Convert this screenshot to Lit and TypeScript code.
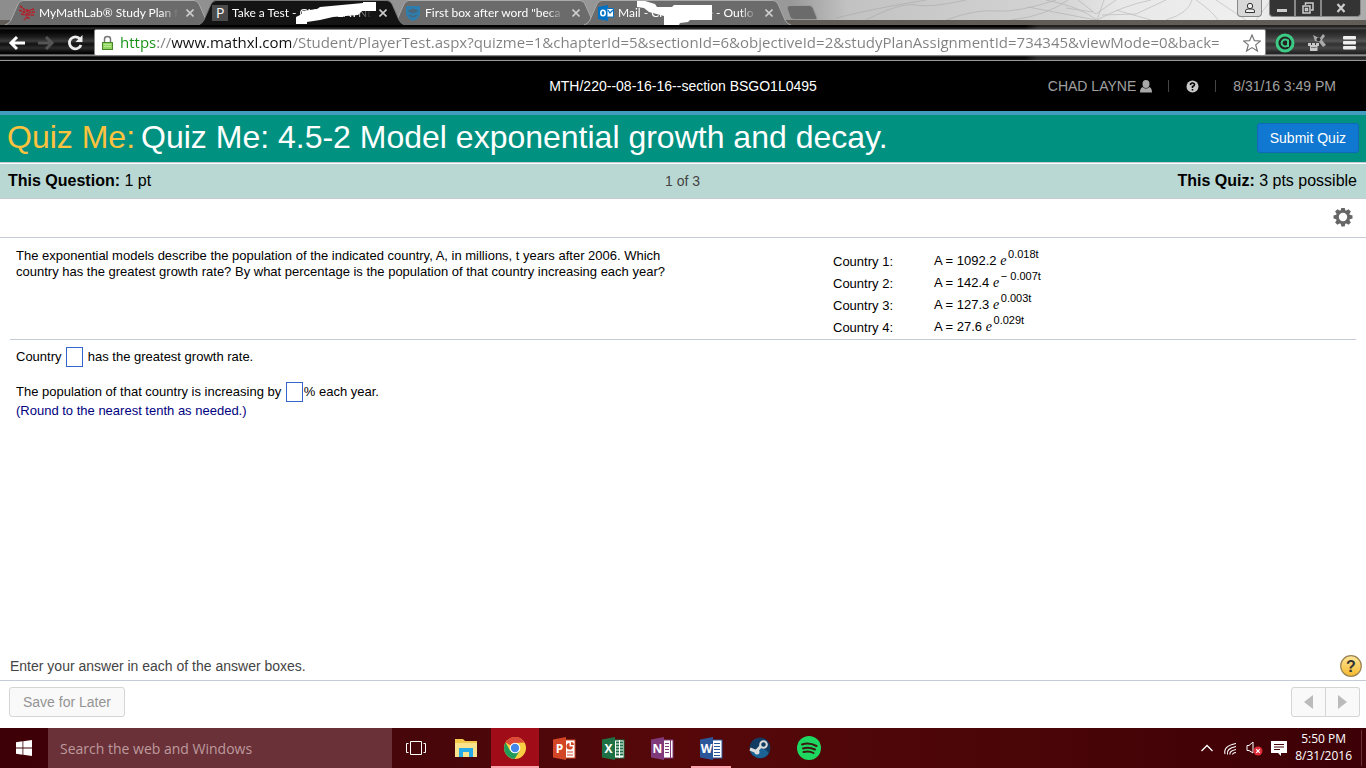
import { LitElement, html, css, svg, TemplateResult } from "lit";
import { customElement, property } from "lit/decorators.js";

@customElement("browser-tab")
class BrowserTab extends LitElement {
  @property() label = "";
  @property({ type: Boolean, reflect: true }) active = false;
  static styles = css`
    :host { flex: 0 0 193px; min-width: 0; position: relative; display: flex; align-items: center; height: 25px;
      box-sizing: border-box; padding: 0 0 0 14px; gap: 4px; color: #fff;
      font: 12px Lato, "Open Sans", sans-serif; }
    .shape { position: absolute; left: 0; top: 0; width: 207px; height: 25px; }
    .shape path { fill: #6c6b6b; stroke: #aaa; }
    :host([active]) .shape path { fill: #141414; stroke: #777; }
    :host([active]) { z-index: 1; }
    .icon, .title, .close { position: relative; }
    .icon { width: 16px; height: 16px; }
    .title { flex: 1; min-width: 0; overflow: hidden; white-space: pre; line-height: 18px;
      -webkit-mask-image: linear-gradient(90deg, #000 88%, transparent); }
    .close { border: 0; background: none; padding: 0; width: 16px; height: 20px; display: grid; place-items: center; }
    .close svg { width: 8px; height: 8px; stroke: #ccc; stroke-width: 1.6; }
    ::slotted(.cover) { position: absolute; left: 0; top: 0; width: 193px; height: 25px; }
  `;
  render() {
    return html`
      <svg class="shape" viewBox="0 0 207 25"><path d="M0 25 Q4 24 6 20 L13 4 Q15 .5 18 .5 H189 Q192 .5 194 4 L201 20 Q203 24 207 25"/></svg>
      <span class="icon"><slot name="icon"></slot></span>
      <span class="title">${this.label}</span>
      <button class="close" aria-label="Close tab"><svg viewBox="0 0 8 8"><path d="M.5 .5 7.5 7.5M7.5 .5 .5 7.5"/></svg></button>
      <slot></slot>`;
  }
}

@customElement("browser-chrome")
class BrowserChrome extends LitElement {
  static styles = css`
    :host { display: block; height: 61px; overflow: hidden; position: relative; }
    .strip { display: flex; height: 25px; padding-left: 5px; position: relative; box-sizing: border-box; background:
      linear-gradient(#0000 20px, #625c57 20px),
      linear-gradient(90deg, #8d8d8d, #999 58%, #c2c2c2 62%, #d5d5d5 78%, #e8e8e8 82%, #f0f0f0 92%, #aaa); }
    .trees { position: absolute; right: 0; top: 0; width: 550px; height: 20px; fill: none; stroke: #999; stroke-width: .8; opacity: .5; }
    .newtab { width: 32px; height: 15px; margin: 5px 0 0 9px; padding: 0; border: 0; background: none; }
    .newtab svg, .icon svg { display: block; }
    .windowbtns { margin-left: auto; display: flex; position: relative; height: 17px; margin-right: 5px; }
    .windowbtns button { border: 1px solid #888; border-top: 0; padding: 0; background: #343434; display: grid; place-items: center; width: 26px; }
    .windowbtns .user { background: #d8d8d8; width: 25px; margin-right: 7px; border-radius: 0 0 4px 4px; }
    .windowbtns .min { border-radius: 0 0 0 4px; }
    .windowbtns .shut { width: 40px; border-radius: 0 0 4px 0; }
    .bar { display: flex; align-items: center; height: 36px; box-sizing: border-box; padding: 0 1px 0 2px; border-bottom: 1px solid #999;
      background: linear-gradient(90deg, #0000 75%, #fff2 76%), linear-gradient(#000 0 2px, #333 3px, #060606 5px 7px, #1c1c1c 12px, #3b3b3b 16px, #111 19px, #2c2c2c 23px, #080808 27px, #000 29px, #aaa 30px, #555 31px, #000 32px, #111 34px); }
    .bar button { border: 0; background: none; padding: 0; display: grid; place-items: center; }
    .nav { width: 29px; }
    .address { flex: 1; min-width: 0; display: flex; align-items: center; height: 27px; background: #fff; border: 1px solid #888; box-sizing: border-box; border-radius: 2px; margin-left: 5px; padding: 0 4px 0 7px; }
    .address svg { flex: none; }
    .address input { flex: 1; min-width: 0; border: 0; outline: 0; padding: 0 0 2px; margin-left: 7px; height: 23px; box-sizing: border-box;
      font: 15px "Open Sans", "Noto Sans", sans-serif; color: transparent;
      background: linear-gradient(90deg, #159015 0 37px, #808080 37px 52px, #111 52px 171px, #808080 171px);
      -webkit-background-clip: text; background-clip: text; }
    .ext { width: 32px; margin-left: 3px; }
    .ext + .ext { margin-left: 0; }
  `;
  render() {
    return html`
      <div class="strip">
        <svg class="trees" viewBox="0 0 550 20" preserveAspectRatio="none"><path d="M20 18Q60 8 110 0M50 20Q85 2 100 5T150 0M130 20Q160 9 180 11T240 0M195 20Q230 16 252 0M212 7 280 20M230 0Q262 6 281 20L288 0M281 20Q306 6 335 0M262 0 280 14 300 0M250 8 277 12M286 15 320 14 350 0M335 20 300 10M380 0Q395 10 402 20M350 20Q373 13 376 0M400 0 430 20M440 20 455 0"/></svg>
        <browser-tab label="MyMathLab® Study Plan f">
          <svg slot="icon" width="16" height="16" viewBox="0 0 16 16" fill="none" stroke="#b51f2a" stroke-width="1.7"><path d="M1 1 7 6M0 5 7 8M2 9 7 10M15 4 9 6M16 7 9 8M15 10 9 10M8 4V12L5 15M8 12 11 14" stroke-dasharray="3 .7"/></svg>
        </browser-tab>
        <browser-tab active label="Take a Test - CHAD LAYNE">
          <svg slot="icon" width="16" height="16"><rect width="16" height="16" fill="#4b4b4b"/><text x="4" y="13" font-family="Open Sans" font-size="14" fill="#fff">P</text></svg>
          <svg class="cover" viewBox="0 0 193 25"><path fill="#fff" d="M98 24V17L104 14V11L119 9 122 7 165 3V2H178V11H164L160 15 135 17 122 20 109 22V24Z"/></svg>
        </browser-tab>
        <browser-tab label='First box after word "beca'>
          <svg slot="icon" width="16" height="16" viewBox="0 0 16 16"><path fill="#2d7daf" d="M1 1H15V8Q15 13 8 16Q1 13 1 8Z"/><path fill="#4a6678" d="M2 6 8 3.500 14 6 8 8.500ZM4 9.500 8 11 12 9.500V11L8 12.500 4 11Z"/></svg>
        </browser-tab>
        <browser-tab label="Mail - Chad Layne - Outlo">
          <svg slot="icon" width="16" height="16" viewBox="0 0 16 16"><path fill="#0072c6" d="M0 2 10 0V16L0 14Z"/><path fill="#fff" stroke="#0072c6" d="M9.500 3.500H15.500V12H9.500"/><path d="M10 5 12 8 15 5" fill="none" stroke="#0072c6" stroke-width="1.300"/><ellipse cx="5" cy="8" rx="2.200" ry="2.800" fill="none" stroke="#fff" stroke-width="1.600"/></svg>
          <svg class="cover" viewBox="0 0 193 25"><path fill="#fff" d="M53 1H61L71 4 73 7 88 7 90 5H128V20H106L104 22 96 23 95 25H80V16L65 12 60 8 53 7Z"/></svg>
        </browser-tab>
        <button class="newtab" aria-label="New tab"><svg width="32" height="15"><path d="M1 3Q1 .5 4 .5H23Q26 .5 27 3L31 13Q31 14.500 29 14.500H8Q5 14.500 4 12Z" fill="#6c6b6b" stroke="#9a9a9a"/></svg></button>
        <div class="windowbtns">
          <button class="user" aria-label="User"><svg width="12" height="12" viewBox="0 0 12 12" fill="#eee" stroke="#333"><path d="M1.500 10.500V9Q1.500 7 4 7H8Q10.500 7 10.500 9V10.500Z"/><circle cx="6" cy="4" r="2.700"/></svg></button>
          <button class="min" aria-label="Minimize"><svg width="12" height="12"><rect x="1" y="7" width="10" height="3" fill="#ccc"/></svg></button>
          <button aria-label="Restore"><svg width="12" height="12" fill="none" stroke="#ccc" stroke-width="1.500"><path d="M3.500 3V1H11V8H9M1 4H8V11H1ZM3.500 6.500H5.500V8.500H3.500Z"/></svg></button>
          <button class="shut" aria-label="Close"><svg width="10" height="10" stroke="#ccc" stroke-width="2.200"><path d="M1.500 1 8.500 9M8.500 1 1.500 9"/></svg></button>
        </div>
      </div>
      <div class="bar">
        <button class="nav" aria-label="Back"><svg width="18" height="16" fill="none" stroke="#fff" stroke-width="3"><path d="M17 8H3M9 2 3 8 9 14"/></svg></button>
        <button class="nav" aria-label="Forward"><svg width="18" height="16" fill="none" stroke="#555" stroke-width="3"><path d="M1 8H15M9 2 15 8 9 14"/></svg></button>
        <button class="nav" aria-label="Reload"><svg width="16" height="16"><path d="M13 4A6 6 0 1 0 14 10" fill="none" stroke="#eee" stroke-width="2.800"/><path d="M15.500 0V7H8.500Z" fill="#eee"/></svg></button>
        <div class="address">
          <svg width="11" height="16" viewBox="0 0 11 16"><path d="M2.500 8V4Q2.500 1.500 5.500 1.500T8.500 4V8" fill="none" stroke="#777" stroke-width="1.500"/><rect x=".5" y="7.500" width="10" height="7" fill="#8ed45d" stroke="#48862c"/><path d="M2 9.500H9M2 11.500H9" stroke="#b7e896"/></svg>
          <input type="text" aria-label="Address" value="https://www.mathxl.com/Student/PlayerTest.aspx?quizme=1&chapterId=5&sectionId=6&objectiveId=2&studyPlanAssignmentId=734345&viewMode=0&back=">
          <svg width="18" height="18" viewBox="0 0 18 18"><path d="M9 1 11.400 6.700 17.400 7 12.700 10.900 14.400 17 9 13.600 3.600 17 5.300 10.900 .6 7 6.600 6.700Z" fill="#fff" stroke="#777" stroke-width="1.200"/></svg>
        </div>
        <button class="ext" aria-label="Extension"><svg width="20" height="20"><circle cx="10" cy="10" r="8" fill="#222" stroke="#3ccb84" stroke-width="3"/><path d="M13 8A3.500 3.500 0 1 0 13 12M13 6.500V14" fill="none" stroke="#3ccb84" stroke-width="2"/></svg></button>
        <button class="ext" aria-label="Extension"><svg width="18" height="20" viewBox="0 0 18 20"><path d="M5 2 9 4 12 5 15 1 17 3 14 7 18 12 15 14 11 9 7 8Z" fill="#aaa"/><circle cx="10.500" cy="6.500" r="2" fill="#333"/><path d="M0 10H3V12H4V10H7V12H8V10H11V13H9.500V18H2V13H0Z" fill="#c8c8c8"/><path d="M3 14.500H8.500" stroke="#777"/></svg></button>
        <button class="ext" aria-label="Menu"><svg width="13" height="14" fill="#eee"><rect width="13" height="3.500" rx="1"/><rect y="5" width="13" height="3.500" rx="1"/><rect y="10" width="13" height="3.500" rx="1"/></svg></button>
      </div>`;
  }
}

interface Model { country: number; scale: string; exponent: string; }

@customElement("quiz-page")
class QuizPage extends LitElement {
  models: Model[] = [
    { country: 1, scale: "1092.2", exponent: "0.018t" },
    { country: 2, scale: "142.4", exponent: "− 0.007t" },
    { country: 3, scale: "127.3", exponent: "0.003t" },
    { country: 4, scale: "27.6", exponent: "0.029t" },
  ];
  static styles = css`
    :host { display: flex; flex-direction: column; flex: 1; background: #fff; color: #000; font: 13px/16px "Liberation Sans", Arial, sans-serif; }
    button { font: inherit; margin: 0; cursor: pointer; }
    .course { display: grid; grid-template-columns: 1fr auto 1fr; align-items: center; height: 50px; background: #000; color: #fff; font-size: 14px; border-bottom: 4px solid #419cbd; }
    .course h1 { grid-column: 2; margin: 0; font-size: 14px; font-weight: 400; }
    .account { display: flex; justify-content: flex-end; align-items: center; padding-right: 30px; color: #a0a0a0; }
    .account a { color: inherit; text-decoration: none; display: flex; align-items: center; gap: 4px; }
    .sep { width: 1px; height: 12px; background: #444; margin: 0 17px 0 16px; }
    .title { display: flex; align-items: center; justify-content: space-between; height: 47px; box-sizing: border-box; padding: 0 7px 2px; background: #009180; }
    .title h2 { display: flex; gap: 6px; margin: 0; font-weight: 400; font-size: 32px; line-height: 40px; padding-bottom: 2px; color: #fff; }
    .title em { font-style: normal; color: #fdc23e; }
    .submit { height: 30px; padding: 0 12px; color: #fff; font-size: 14px; background: #1078d0; border: 1px solid #1068b8; border-radius: 3px; }
    .status { display: grid; grid-template-columns: 1fr auto 1fr; align-items: center; height: 34px; padding: 0 9px 0 8px; background: #b9d8d3; border-bottom: 1px solid #c5cbd6; font-size: 16px; }
    .rule { height: 1px; background: #c5cbd6; margin-bottom: 1px; }
    .status .count { font-size: 14px; color: #444; }
    .status .total { text-align: right; }
    .tools { display: flex; justify-content: flex-end; align-items: center; height: 38px; padding-right: 13px; border-bottom: 1px solid #c5cbd6; }
    .icon { padding: 0; border: 0; background: none; display: block; }
    .icon svg { display: block; }
    .problem { display: grid; grid-template-columns: 61fr 39fr; column-gap: 5px; margin: 0 10px; padding: 10px 0 3px; border-bottom: 1px solid #c5cbd6; }
    .problem p { margin: 0 0 0 6px; max-width: 665px; }
    table { border-collapse: collapse; justify-self: start; }
    th, td { padding: 0; text-align: left; font-weight: 400; white-space: pre; vertical-align: middle; line-height: 16px; }
    th { width: 101px; padding-top: 6px; }
    td { padding-top: 3px; height: 19px; }
    i { font-family: "Liberation Serif", serif; font-size: 14px; }
    sup { font-size: 11px; line-height: 0; vertical-align: 7px; margin-left: -2px; }
    .answers { padding: 6px 16px; }
    .answers p { margin: 0; line-height: 22px; white-space: pre; display: flex; align-items: center; }
    .answers p + p { margin-top: 13px; }
    .answers input { width: 17px; height: 20px; box-sizing: border-box; border: 1px solid #36c; padding: 0; margin: 0 1px; font: inherit; background: #fff; }
    .answers .note { color: #000080; margin-top: 0; line-height: 16px; }
    .hint { display: flex; justify-content: space-between; align-items: center; margin-top: auto; height: 28px; padding: 0 4px 0 10px; font-size: 14px; color: #444; border-bottom: 1px solid #c5cbd6; }
    .foot { display: flex; justify-content: space-between; align-items: center; height: 47px; box-sizing: border-box; padding: 0 6px 5px 9px; }
    .foot button { height: 30px; border: 1px solid #d5d5d5; background: #f9f9f9; color: #949494; }
    .foot .save { font-size: 14px; border-radius: 3px; padding: 0 13px; }
    .pager { display: flex; }
    .pager button { width: 35px; padding: 0; display: grid; place-items: center; border-radius: 3px 0 0 3px; }
    .pager button + button { border-left: 0; border-radius: 0 3px 3px 0; width: 34px; }
  `;
  render() {
    return html`
      <header class="course">
        <h1>MTH/220--08-16-16--section BSGO1L0495</h1>
        <div class="account">
          <a href="#account">CHAD LAYNE <svg width="12" height="13" fill="#a8a8a8"><path d="M6 0Q9.500 0 9.500 4T6 8 2.500 4 6 0M2.500 7Q6 10 9.500 7 12 8 12 12.500H0Q0 8 2.500 7"/></svg></a>
          <span class="sep"></span>
          <a href="#help" aria-label="Help"><svg width="13" height="13"><circle cx="6.500" cy="6.500" r="6" fill="#c8c8c8"/><path d="M4.500 5Q4.500 3 6.500 3T8.500 4.800Q8.500 6 6.500 6.500V8M6.500 9V10.500" fill="none" stroke="#000" stroke-width="1.600"/></svg></a>
          <span class="sep"></span>
          <time>8/31/16 3:49 PM</time>
        </div>
      </header>
      <div class="title"><h2><em>Quiz Me:</em><span>Quiz Me: 4.5-2 Model exponential growth and decay.</span></h2><button class="submit">Submit Quiz</button></div>
      <div class="rule"></div>
      <div class="status"><span><b>This Question:</b> 1 pt</span><span class="count">1 of 3</span><span class="total"><b>This Quiz:</b> 3 pts possible</span></div>
      <div class="tools"><button class="icon" aria-label="Settings"><svg width="20" height="20" viewBox="-10 -9 20 20"><g fill="#666">${[0, 45, 90, 135].map((a) => svg`<path transform="rotate(${a})" d="M-2.500 -6 -1.600 -9.500H1.600L2.500 -6V6L1.600 9.500H-1.600L-2.500 6Z"/>`)}<circle r="7"/></g><circle r="4.200" fill="#fff"/></svg></button></div>
      <main>
        <section class="problem">
          <p>The exponential models describe the population of the indicated country, A, in millions, t years after 2006. Which<br>country has the greatest growth rate? By what percentage is the population of that country increasing each year?</p>
          <table><tbody>${this.models.map((m) => html`<tr><th scope="row">Country ${m.country}:</th><td>A = ${m.scale} <i>e</i> <sup>${m.exponent}</sup></td></tr>`)}</tbody></table>
        </section>
        <section class="answers">
          <p><label for="country">Country </label><input id="country" type="text"><span> has the greatest growth rate.</span></p>
          <p><label for="percent">The population of that country is increasing by </label><input id="percent" type="text"><span>% each year.</span></p>
          <div class="note">(Round to the nearest tenth as needed.)</div>
        </section>
      </main>
      <div class="hint"><span>Enter your answer in each of the answer boxes.</span>
        <button class="icon" aria-label="Help"><svg width="22" height="24"><defs><linearGradient id="gold" x2="0" y2="1"><stop stop-color="#ffe79a"/><stop offset="1" stop-color="#f5b92c"/></linearGradient></defs><circle cx="11" cy="12" r="10.300" fill="url(#gold)" stroke="#9b8352" stroke-width="1.200"/><text x="11" y="18" text-anchor="middle" font-family="Liberation Sans" font-weight="700" font-size="16" fill="#333">?</text></svg></button>
      </div>
      <footer class="foot"><button class="save">Save for Later</button>
        <div class="pager"><button aria-label="Previous"><svg width="10" height="14"><path d="M9 0V14L0 7Z" fill="#bbb"/></svg></button><button aria-label="Next"><svg width="10" height="14"><path d="M0 0V14L9 7Z" fill="#bbb"/></svg></button></div>
      </footer>`;
  }
}

const office = (letter: string, dark: string, art: TemplateResult) => svg`
  <rect x="11" y="3" width="11" height="18" fill="#fff" stroke="${dark}"/>${art}
  <path d="M0 2.500 13 0V23L0 20.500Z" fill="${dark}"/>
  <text x="6.500" y="16" text-anchor="middle" font-family="Open Sans" font-weight="700" font-size="12" fill="#fff">${letter}</text>`;

@customElement("task-bar")
class TaskBar extends LitElement {
  static styles = css`
    :host { display: flex; height: 40px; background: linear-gradient(90deg, #3d0006, #46060a 29%, #560809 50%, #4a0507 75%, #3c0006); color: #fff; font: 12px/17px "Open Sans", "Noto Sans", sans-serif; }
    button { border: 0; padding: 0; background: none; display: grid; place-items: center; color: inherit; font: inherit; }
    .start { width: 48px; }
    .search { width: 344px; box-sizing: border-box; border: 0; border-radius: 0; padding: 0 12px; background: #6a3138; color: #c4a5a8; font: 14px "Open Sans", "Noto Sans", sans-serif; }
    .search::placeholder { color: #bd9a9e; opacity: 1; }
    .apps { display: flex; gap: 1px; flex: 1; padding-left: 1px; }
    .apps button { width: 48px; border-bottom: 2px solid transparent; border-top: 2px solid transparent; box-sizing: border-box; }
    .apps .focus { background: #a00c17; border-bottom-color: #fba3ac; border-top-color: #a00c17; }
    .apps .open { background: linear-gradient(#fba3ac, #fba3ac) center bottom / 40px 2px no-repeat border-box; }
    .tray { display: flex; align-items: center; gap: 8px; }
    .clock { display: grid; text-align: center; padding: 0 9px 2px 0; margin-right: 4px; border-right: 1px solid #6a3138; }
  `;
  apps: { name: string; state: string; art: TemplateResult }[] = [
    { name: "Task View", state: "", art: svg`<path d="M4.500 4.500H15.500V17.500H4.500ZM2.500 6.500H.5V15.500H2.500M17.500 6.500H19.500V15.500H17.500" fill="none" stroke="#fff"/>` },
    { name: "File Explorer", state: "", art: svg`<path d="M0 2H8L10 4H22V20H0Z" fill="#f3c84b"/><path d="M0 6H22V20H0Z" fill="#fbe28c"/><path d="M4 20V11H18V20H14V15H8V20Z" fill="#27aae8"/>` },
    { name: "Chrome", state: "focus", art: svg`<circle cx="11" cy="11" r="11" fill="#f8cf42"/><path d="M11 11 1.500 5.500A11 11 0 0 1 20.500 5.500L11 6Z" fill="#dc4939"/><path d="M1.500 5.500A11 11 0 0 0 10.500 22L15.500 14 6 13.500Z" fill="#229b58"/><circle cx="11" cy="11" r="5.300" fill="#fff"/><circle cx="11" cy="11" r="4.200" fill="#4387e8"/>` },
    { name: "PowerPoint", state: "", art: office("P", "#d24625", svg`<path d="M14 15H20M14 18H20" stroke="#d24625"/><path d="M16.500 6A3.300 3.300 0 1 0 20 9.500H16.500Z" fill="#d24625"/><path d="M18 5A3 3 0 0 1 21 8H18Z" fill="#d24625"/>`) },
    { name: "Excel", state: "", art: office("X", "#1e7145", svg`<path d="M14 5.500H21M14 8.500H21M14 11.500H21M14 14.500H21M14 17.500H21" stroke="#1e7145" stroke-width="2"/><path d="M17.500 3V21" stroke="#fff"/>`) },
    { name: "OneNote", state: "", art: office("N", "#80397b", svg`<path d="M14 6.500H18M14 9.500H18M14 12.500H18M14 15.500H18M19.500 3V21" stroke="#80397b"/>`) },
    { name: "Word", state: "open", art: office("W", "#2b579a", svg`<path d="M14 6.500H20M14 9.500H20M14 12.500H20M14 15.500H20M14 18.500H20" stroke="#2b579a"/>`) },
    { name: "Steam", state: "", art: svg`<circle cx="11" cy="11" r="10.500" fill="#123b62"/><path d="M1 13A10.500 10.500 0 0 0 20 16Q15 10 9 12Z" fill="#1c6396"/><path d="M1 12 7 14.500 13 8" fill="none" stroke="#ddd" stroke-width="3"/><circle cx="14.500" cy="7.500" r="3.300" fill="#123b62" stroke="#ddd" stroke-width="2"/><circle cx="8" cy="15" r="2.500" fill="#ddd"/>` },
    { name: "Spotify", state: "", art: svg`<circle cx="11" cy="11" r="12" fill="#1ed760"/><path d="M4 7.500Q11 5 18.500 9M5 11.500Q11 9.500 17 12.500M5.500 15Q11 13.500 15.500 16" fill="none" stroke="#3b1a12" stroke-width="2" stroke-linecap="round"/>` },
  ];
  render() {
    return html`
      <button class="start" aria-label="Start"><svg width="16" height="16" fill="#fff"><path d="M0 2.300 6.500 1.300V7.600H0ZM7.300 1.200 16 0V7.600H7.300ZM0 8.400H6.500V14.700L0 13.700ZM7.300 8.400H16V16L7.300 14.800Z"/></svg></button>
      <input class="search" type="search" aria-label="Search" placeholder="Search the web and Windows">
      <nav class="apps">${this.apps.map((a) => html`<button class="${a.state}" aria-label="${a.name}"><svg width="22" height="23" overflow="visible">${a.art}</svg></button>`)}</nav>
      <div class="tray">
        <button aria-label="Hidden icons"><svg width="14" height="16" fill="none" stroke="#fff" stroke-width="1.300"><path d="M1.500 11 7 5.500 12.500 11"/></svg></button>
        <button aria-label="Network"><svg width="16" height="16" fill="none" stroke="#fff" stroke-width="1.100"><path d="M3 14Q1 6 14 3.500M5.500 14.500Q4 8.500 14 6.500M8 14.500Q7 11 14 9.500M10.500 14.500Q10.500 13 14 12.500"/></svg></button>
        <button aria-label="Volume"><svg width="17" height="16"><path d="M1 5.500H3L7 2V13L3 10.500H1Z" fill="none" stroke="#fff"/><circle cx="12" cy="11" r="4.500" fill="#e02b38"/><path d="M10.200 9.200 13.800 12.800M13.800 9.200 10.200 12.800" stroke="#fff" stroke-width="1.200"/></svg></button>
        <button aria-label="Notifications"><svg width="16" height="17"><path d="M0 1H16V13H10V16L7 13H0Z" fill="#fff"/><path d="M3 4.500H13M3 7H13M3 9.500H9" stroke="#460509" stroke-width="1.200"/></svg></button>
        <div class="clock"><span>5:50 PM</span><span>8/31/2016</span></div>
      </div>`;
  }
}

@customElement("app-root")
class AppRoot extends LitElement {
  static styles = css`
    :host { display: flex; flex-direction: column; min-height: 100vh; }
  `;
  render() {
    return html`<browser-chrome></browser-chrome><quiz-page></quiz-page><task-bar></task-bar>`;
  }
}
